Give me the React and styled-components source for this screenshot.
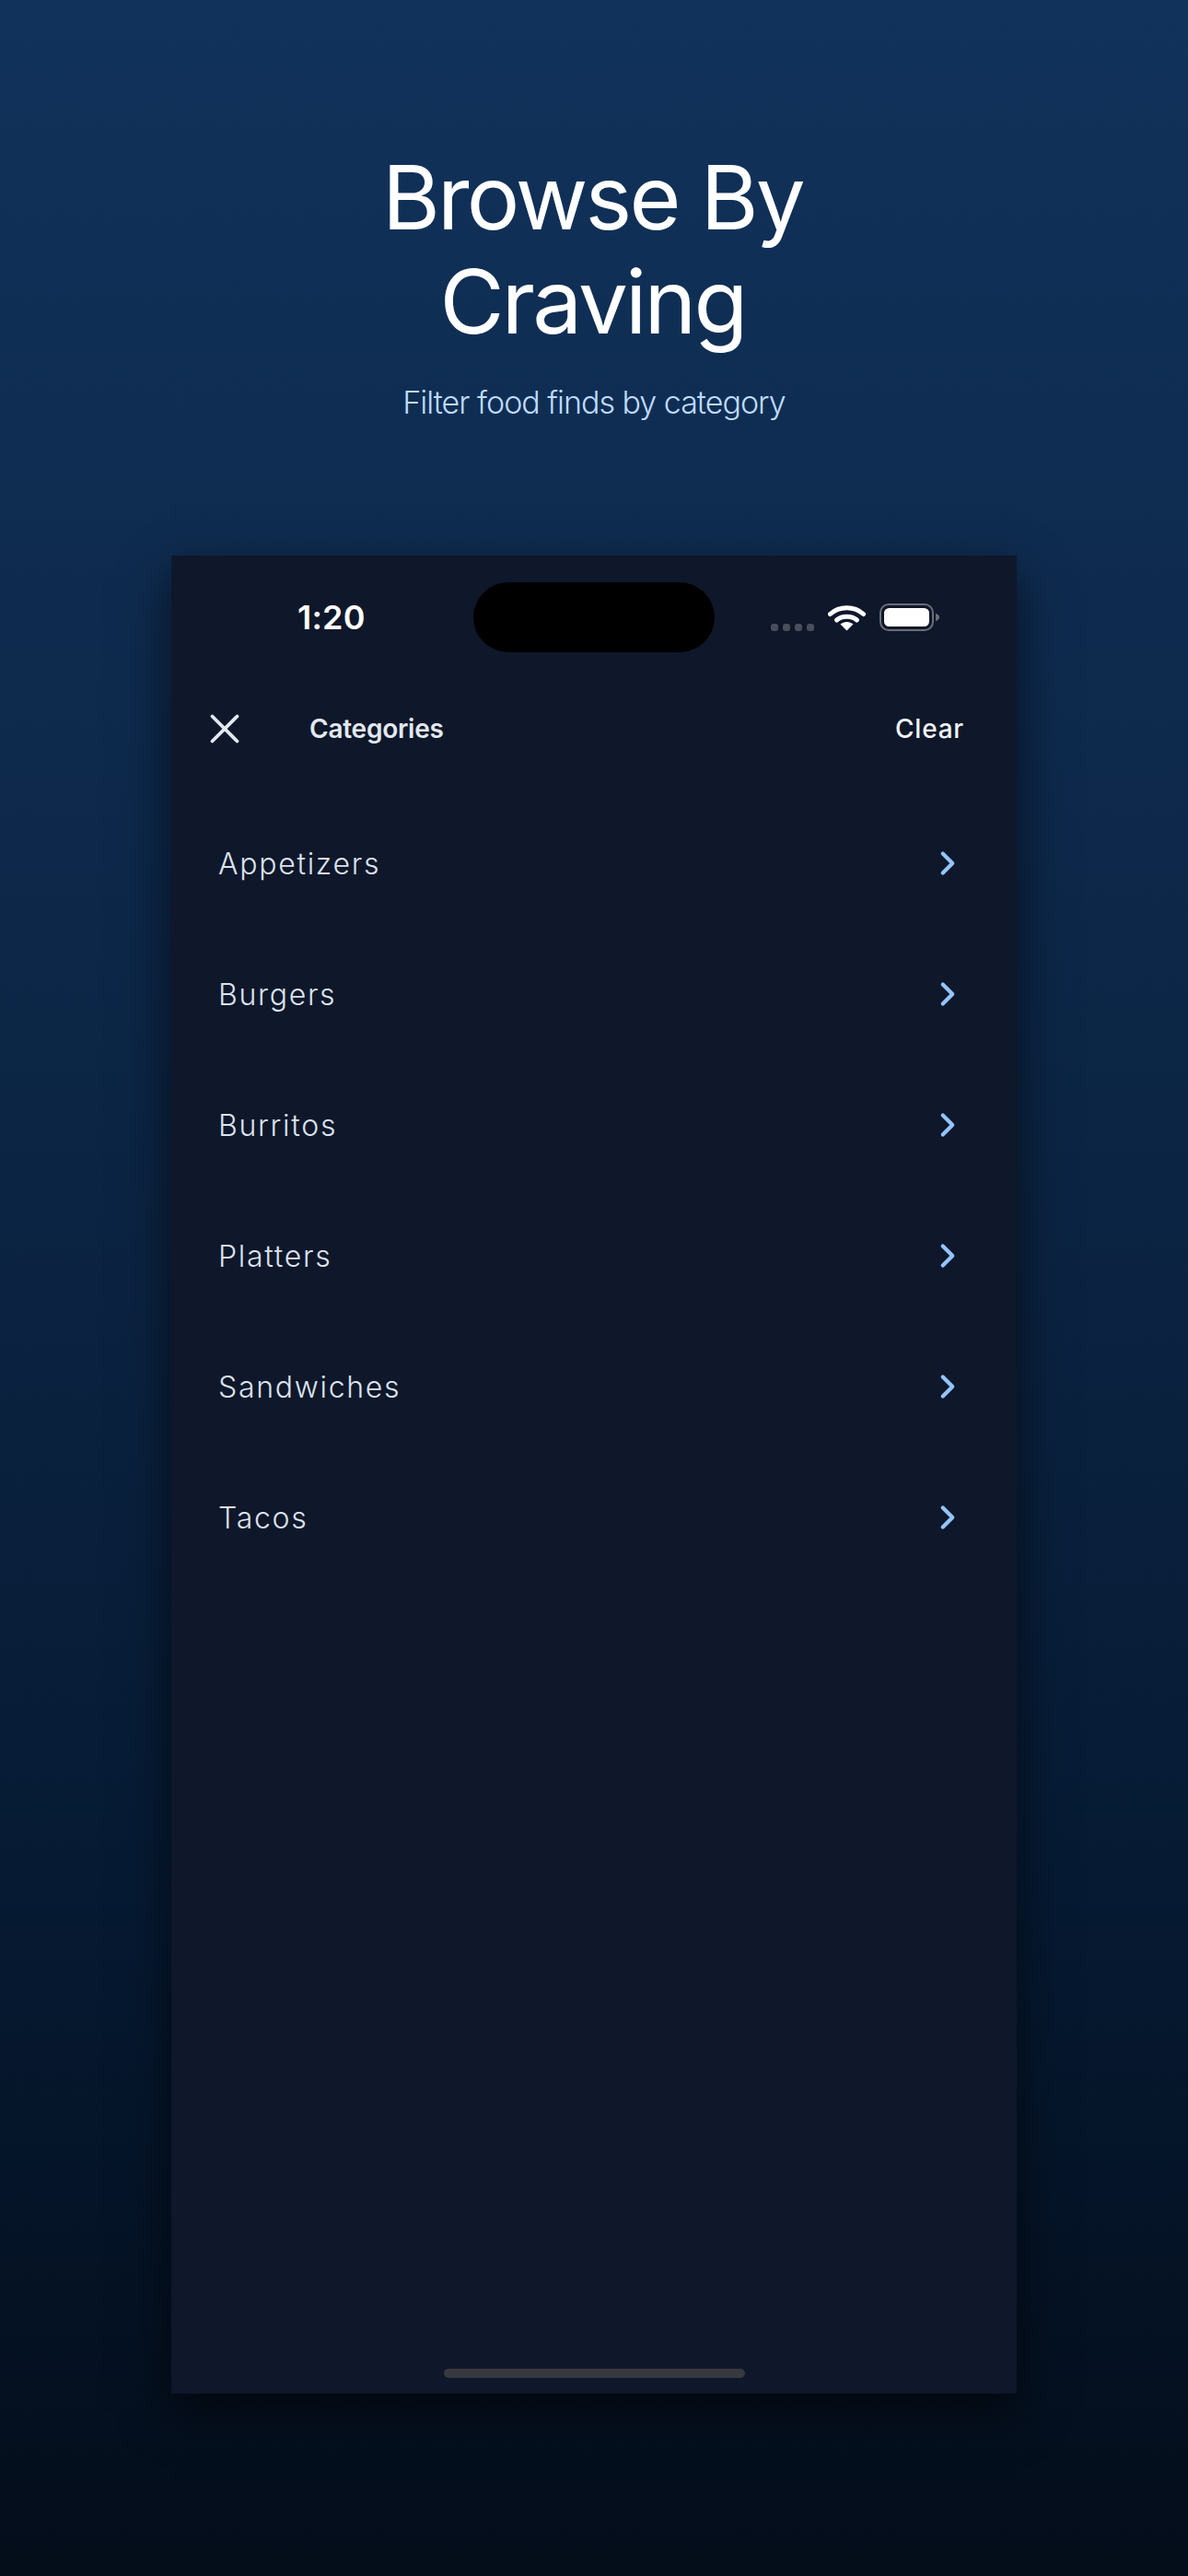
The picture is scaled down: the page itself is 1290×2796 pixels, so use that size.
import React from 'react';
import styled, { createGlobalStyle } from 'styled-components';
import { X, ChevronRight } from 'lucide-react';

const GlobalStyle = createGlobalStyle`
  html, body {
    margin: 0;
    padding: 0;
    background: #040d1a;
  }
  * {
    box-sizing: border-box;
  }
`;

const Page = styled.div`
  width: 1290px;
  height: 2796px;
  overflow: hidden;
  display: flex;
  flex-direction: column;
  align-items: center;
  padding-top: 158px;
  font-family: 'Inter', 'Liberation Sans', sans-serif;
  background: linear-gradient(180deg, #11325b 0%, #0b2341 50%, #061a33 73%, #040d1a 100%);
`;

const Title = styled.h1`
  margin: 0 3px 0 0;
  width: 700px;
  text-align: center;
  font-size: 96px;
  line-height: 113px;
  font-weight: 400;
  letter-spacing: -2.8px;
  color: #ffffff;
`;

const Subtitle = styled.p`
  margin: 31px 0 0;
  font-size: 34px;
  line-height: 44px;
  font-weight: 300;
  letter-spacing: -1px;
  color: #bfdbfe;
`;

const Screen = styled.div`
  width: 918px;
  height: 1995px;
  margin-top: 144px;
  display: flex;
  flex-direction: column;
  background: #0f172a;
  box-shadow: 0 20px 50px rgba(0, 0, 0, 0.6);
`;

const StatusBar = styled.div`
  display: grid;
  grid-template-columns: 1fr 262px 1fr;
  align-items: center;
  padding-top: 29px;
`;

const Time = styled.div`
  padding-left: 137px;
  font-size: 36px;
  line-height: 44px;
  font-weight: 600;
  letter-spacing: 0.2px;
  color: #ffffff;
`;

const Island = styled.div`
  height: 76px;
  border-radius: 38px;
  background: #000000;
`;

const StatusIcons = styled.div`
  display: flex;
  align-items: center;
  gap: 15px;
  padding-left: 61px;
`;

const SignalDots = styled.div`
  display: flex;
  gap: 5px;
  margin-top: 22px;
`;

const Dot = styled.span`
  width: 8px;
  height: 8px;
  border-radius: 3px;
  background: #4b4e5a;
`;

const Header = styled.div`
  display: flex;
  align-items: center;
  height: 64px;
  margin-top: 51px;
  padding: 0 57px 0 31px;
`;

const CloseButton = styled.div`
  display: flex;
  width: 54px;
  color: #e2e8f0;
`;

const HeaderTitle = styled.div`
  margin-left: 65px;
  font-size: 28px;
  font-weight: 600;
  letter-spacing: -0.25px;
  color: #e2e8f0;
`;

const ClearButton = styled.div`
  margin-left: auto;
  font-size: 28px;
  font-weight: 500;
  letter-spacing: 0.8px;
  color: #f1f5f9;
`;

const List = styled.div`
  margin-top: 43px;
  display: flex;
  flex-direction: column;
`;

const Row = styled.div`
  height: 142px;
  display: flex;
  align-items: center;
  justify-content: space-between;
  padding: 0 54px 0 51px;
`;

const RowLabel = styled.span`
  font-size: 32px;
  font-weight: 350;
  letter-spacing: 1.7px;
  color: #dbe3ee;
`;

const Chevron = styled(ChevronRight)`
  color: #93c5fd;
`;

const HomeBar = styled.div`
  width: 327px;
  height: 10px;
  margin: auto auto 17px;
  border-radius: 5px;
  background: #37393f;
`;

const categories = ['Appetizers', 'Burgers', 'Burritos', 'Platters', 'Sandwiches', 'Tacos'];

const WifiIcon = () => (
  <svg width="41" height="30" viewBox="0 0 41 30" fill="none">
    <path d="M2.5 11.5C12.5 2.5 28.5 2.5 38.5 11.5" stroke="#fff" strokeWidth="5" strokeLinecap="round" />
    <path d="M9.5 18C15.5 13 25.5 13 31.5 18" stroke="#fff" strokeWidth="5" strokeLinecap="round" />
    <path d="M13.5 22.5C17.5 19 23.5 19 27.5 22.5L20.5 29.5Z" fill="#fff" />
  </svg>
);

const BatteryIcon = () => (
  <svg width="66" height="30" viewBox="0 0 66 30" fill="none">
    <rect x="1" y="1" width="57" height="28" rx="9" stroke="#6b6e78" strokeWidth="2" />
    <rect x="5" y="5" width="49" height="20" rx="5.5" fill="#fff" />
    <path d="M61 11C63.5 11.5 65 13 65 15C65 17 63.5 18.5 61 19Z" fill="#6b6e78" />
  </svg>
);

const App = () => (
  <Page>
    <GlobalStyle />
    <Title>
      Browse By
      <br />
      Craving
    </Title>
    <Subtitle>Filter food finds by category</Subtitle>
    <Screen>
      <StatusBar>
        <Time>1:20</Time>
        <Island />
        <StatusIcons>
          <SignalDots>
            <Dot />
            <Dot />
            <Dot />
            <Dot />
          </SignalDots>
          <WifiIcon />
          <BatteryIcon />
        </StatusIcons>
      </StatusBar>
      <Header>
        <CloseButton>
          <X size={54} strokeWidth={1.65} />
        </CloseButton>
        <HeaderTitle>Categories</HeaderTitle>
        <ClearButton>Clear</ClearButton>
      </Header>
      <List>
        {categories.map(name => (
          <Row key={name}>
            <RowLabel>{name}</RowLabel>
            <Chevron size={42} strokeWidth={2.4} />
          </Row>
        ))}
      </List>
      <HomeBar />
    </Screen>
  </Page>
);

export default App;
